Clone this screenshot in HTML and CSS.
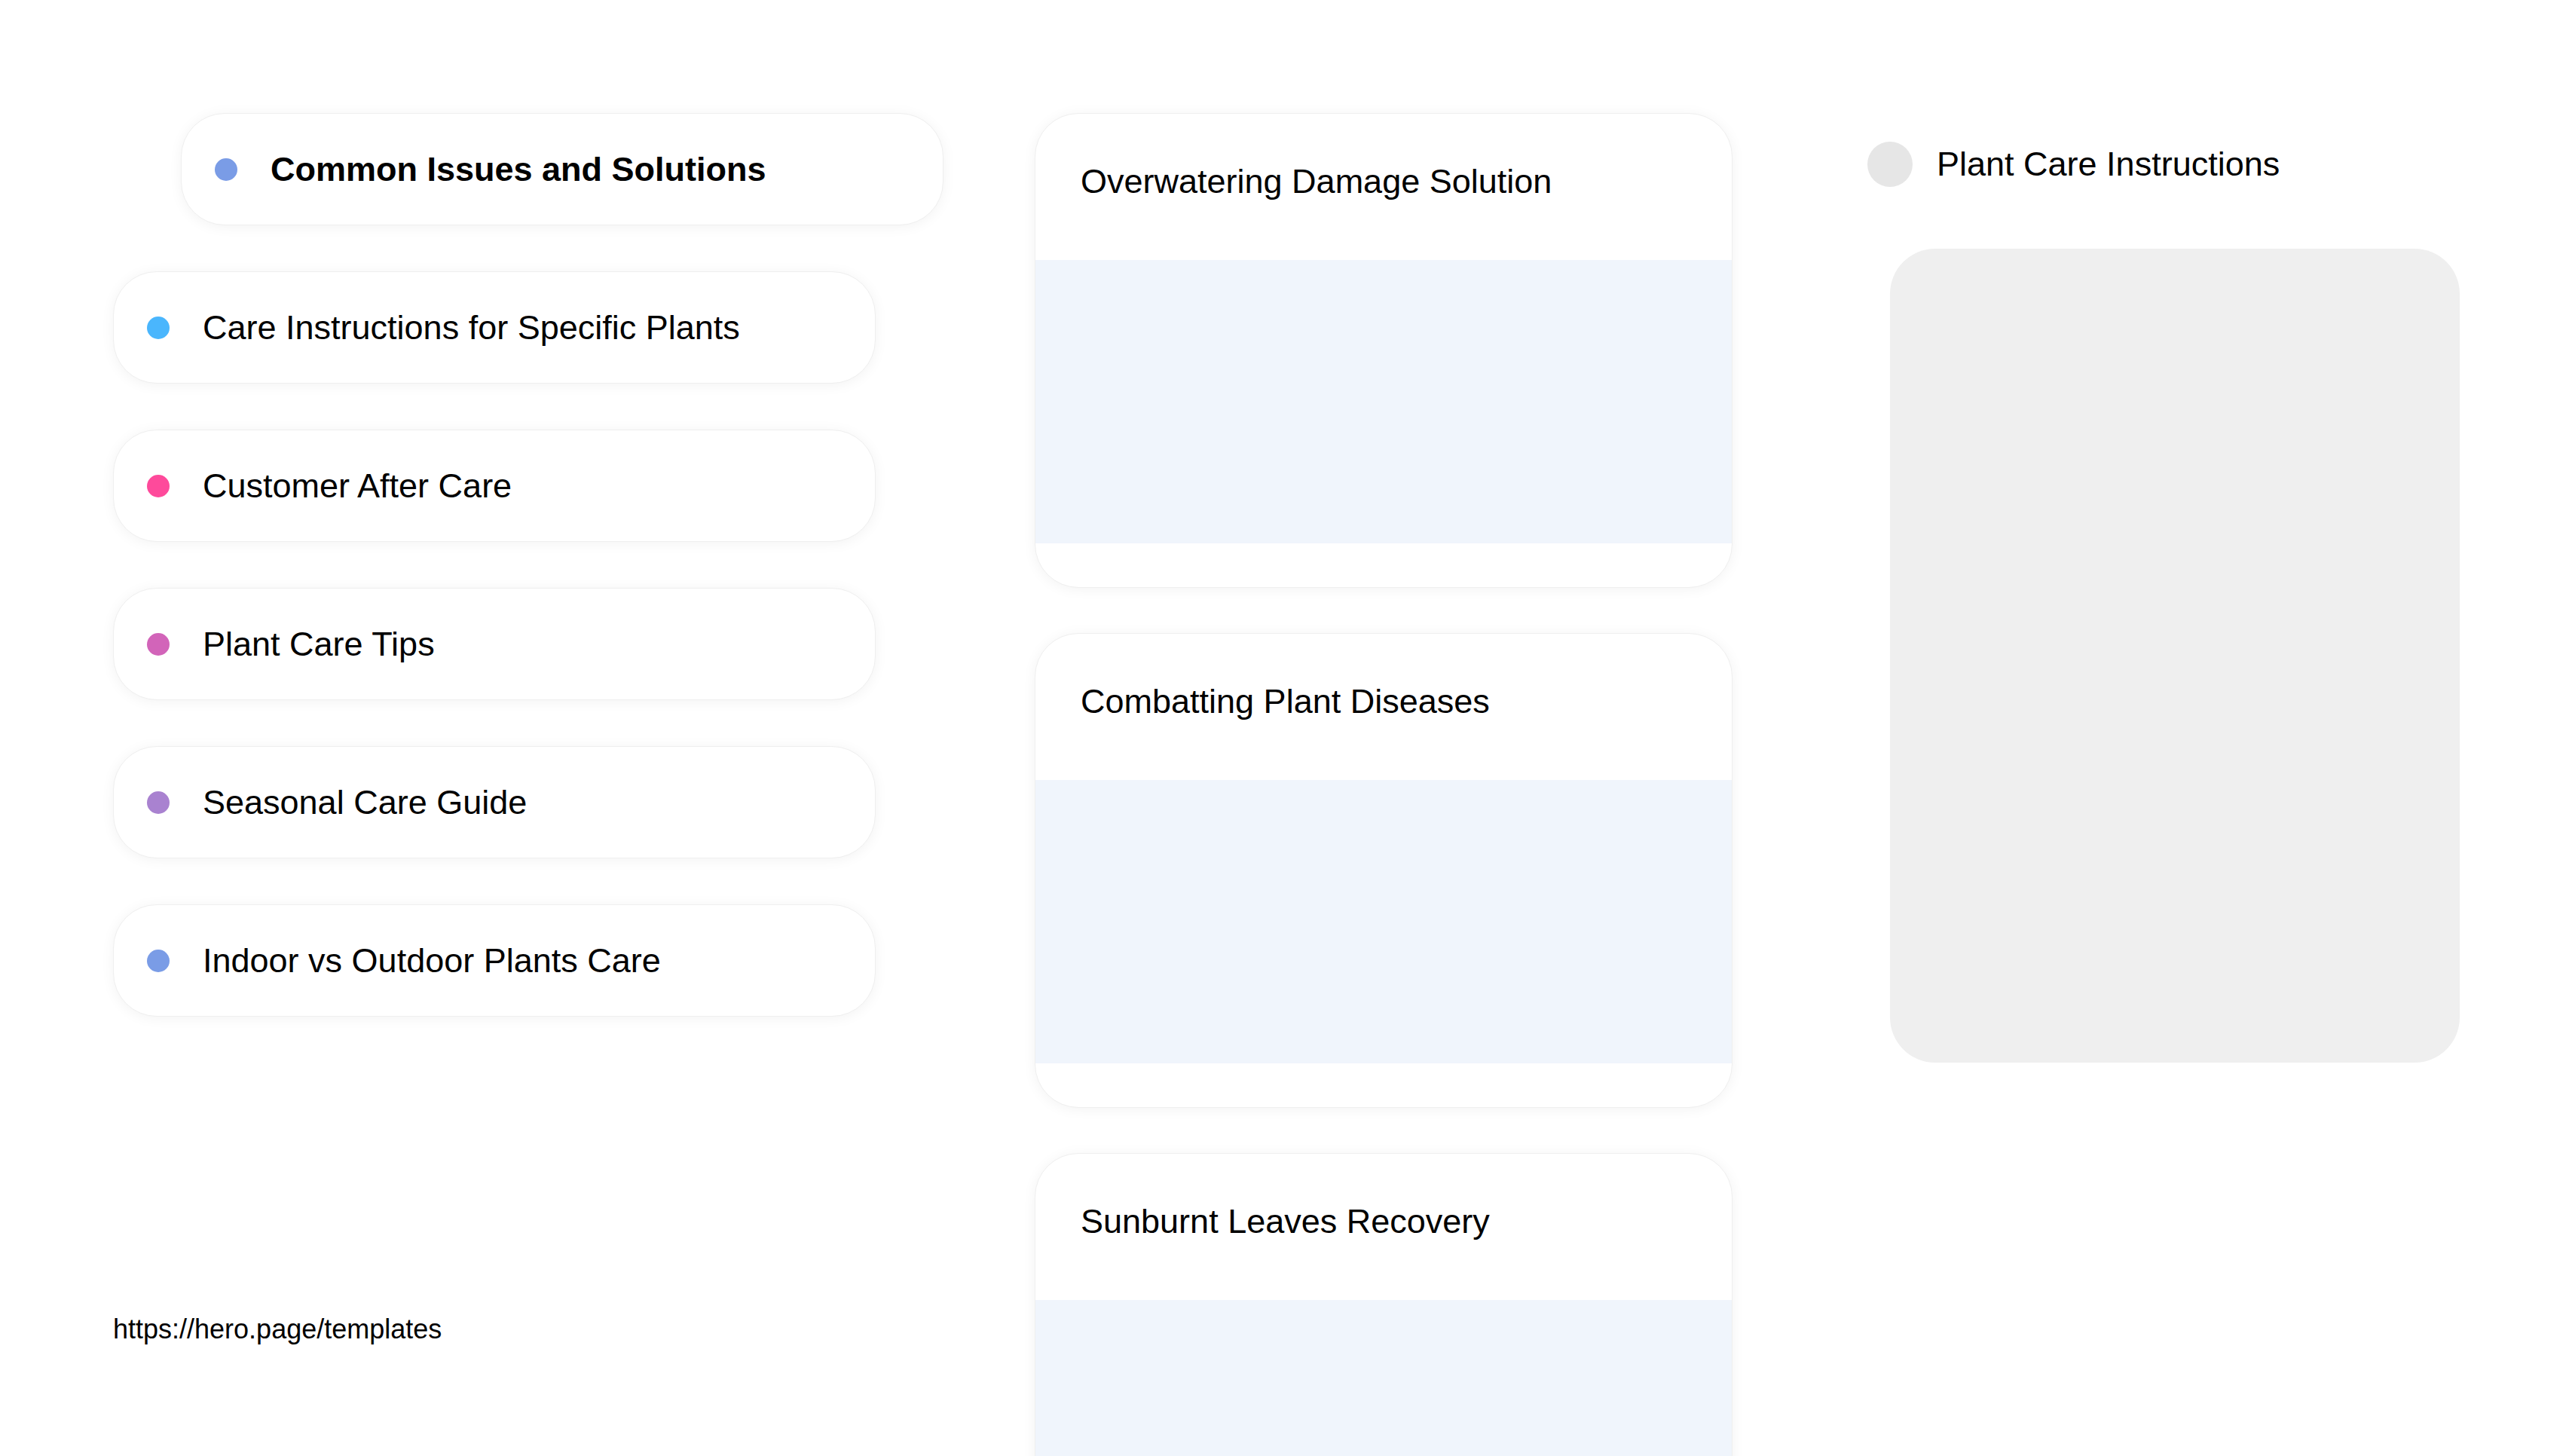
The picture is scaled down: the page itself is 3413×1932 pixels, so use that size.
FILE: index.html
```html
<!DOCTYPE html>
<html lang="en">

<head>
  <meta charset="UTF-8">
  <title>Plant Care Instructions</title>
  <link rel="stylesheet" href="styles.css">
</head>

<body>
  <div class="page">
    <div class="menu-column">
      <div class="menu-list">
        <div class="menu-item active">
          <span class="dot dot-blue"></span>
          <span class="menu-label">Common Issues and Solutions</span>
        </div>
        <div class="menu-item">
          <span class="dot dot-sky"></span>
          <span class="menu-label">Care Instructions for Specific Plants</span>
        </div>
        <div class="menu-item">
          <span class="dot dot-pink"></span>
          <span class="menu-label">Customer After Care</span>
        </div>
        <div class="menu-item">
          <span class="dot dot-orchid"></span>
          <span class="menu-label">Plant Care Tips</span>
        </div>
        <div class="menu-item">
          <span class="dot dot-purple"></span>
          <span class="menu-label">Seasonal Care Guide</span>
        </div>
        <div class="menu-item">
          <span class="dot dot-blue"></span>
          <span class="menu-label">Indoor vs Outdoor Plants Care</span>
        </div>
      </div>
      <p class="site-link">https://hero.page/templates</p>
    </div>

    <div class="topic-column">
      <div class="topic-card">
        <div class="topic-head">Overwatering Damage Solution</div>
        <div class="topic-body"></div>
        <div class="topic-foot"></div>
      </div>
      <div class="topic-card">
        <div class="topic-head">Combatting Plant Diseases</div>
        <div class="topic-body"></div>
        <div class="topic-foot"></div>
      </div>
      <div class="topic-card">
        <div class="topic-head">Sunburnt Leaves Recovery</div>
        <div class="topic-body"></div>
        <div class="topic-foot"></div>
      </div>
    </div>

    <div class="detail-column">
      <div class="detail-header">
        <span class="avatar"></span>
        <span class="detail-title">Plant Care Instructions</span>
      </div>
      <div class="detail-box"></div>
    </div>
  </div>
</body>

</html>
```

FILE: styles.css
```css
body {
  font-family: "Liberation Sans", Arial, sans-serif;
  margin: 0;
  padding: 0;
  background-color: #fff;
  color: #000;
  overflow: hidden;
}

.page {
  display: flex;
  align-items: flex-start;
  padding: 150px 0 0 150px;
  height: 1932px;
  box-sizing: border-box;
}

/* left menu */

.menu-column {
  width: 1102px;
  margin-right: 121px;
  display: flex;
  flex-direction: column;
  height: 100%;
}

.menu-list {
  display: flex;
  flex-direction: column;
  gap: 61px;
}

.menu-item {
  width: 1012px;
  height: 149px;
  box-sizing: border-box;
  display: flex;
  align-items: center;
  gap: 44px;
  padding: 0 44px;
  background-color: #fff;
  border: 1px solid #efefef;
  border-radius: 58px;
  box-shadow: 0 2px 18px rgba(0, 0, 0, 0.05);
  font-size: 45px;
}

.menu-item.active {
  margin-left: 90px;
  font-weight: bold;
}

.dot {
  width: 30px;
  height: 30px;
  border-radius: 50%;
  flex-shrink: 0;
}

.dot-blue {
  background-color: #7a9ce6;
}

.dot-sky {
  background-color: #4ab6fd;
}

.dot-pink {
  background-color: #fe4a9b;
}

.dot-orchid {
  background-color: #d264b9;
}

.dot-purple {
  background-color: #a982d0;
}

.site-link {
  margin: 0;
  margin-top: 394px;
  font-size: 36px;
  line-height: 42px;
}

/* middle topic cards */

.topic-column {
  width: 926px;
  margin-right: 179px;
  display: flex;
  flex-direction: column;
  gap: 60px;
}

.topic-card {
  background-color: #fff;
  border: 1px solid #efefef;
  border-radius: 58px;
  box-shadow: 0 2px 18px rgba(0, 0, 0, 0.05);
  overflow: hidden;
  flex-shrink: 0;
}

.topic-head {
  height: 194px;
  box-sizing: border-box;
  padding: 64px 60px 0;
  font-size: 45px;
  line-height: 52px;
}

.topic-body {
  height: 376px;
  background-color: #f0f5fc;
}

.topic-foot {
  height: 58px;
}

/* right detail */

.detail-column {
  width: 796px;
  padding-top: 38px;
}

.detail-header {
  display: flex;
  align-items: center;
  gap: 32px;
}

.avatar {
  width: 60px;
  height: 60px;
  border-radius: 50%;
  background-color: #e6e6e6;
}

.detail-title {
  font-size: 45px;
}

.detail-box {
  margin: 82px 0 0 30px;
  width: 756px;
  height: 1080px;
  border-radius: 60px;
  background-color: #efefef;
}
```
